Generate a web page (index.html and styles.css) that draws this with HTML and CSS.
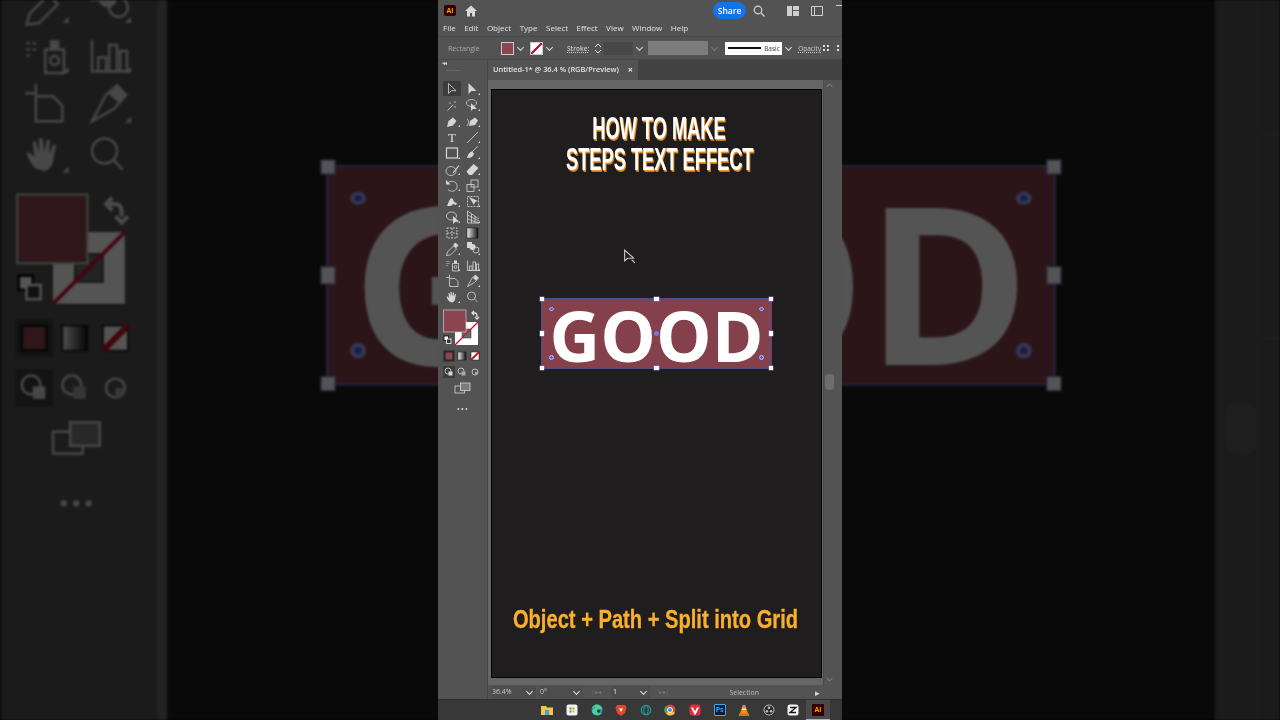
FILE: index.html
```html
<!DOCTYPE html>
<html lang="en">
<head>
    <meta charset="UTF-8">
    <title>How to make steps text effect</title>
    <link rel="stylesheet" href="styles.css">
</head>
<body>
    <!-- blurred, darkened zoom of the same window behind the phone-sized video -->
    <div class="backdrop">
        <div class="bd-panel">
            <svg class="bd-tools" viewBox="0 0 50 350"><use href="#tools"></use></svg>
        </div>
        <div class="bd-gutter"></div>
        <div class="bd-board"></div>
        <div class="bd-scroll"><div class="bd-thumb"></div></div>
        <div class="bd-edge"><div class="bd-cell"></div><div class="bd-cell"></div><div class="bd-cell"></div></div>
        <div class="art art-back">
            <span class="art-text">GOOD</span>
            <i class="h h-tl"></i><i class="h h-tc"></i><i class="h h-tr"></i>
            <i class="h h-ml"></i><i class="h h-mr"></i>
            <i class="h h-bl"></i><i class="h h-bc"></i><i class="h h-br"></i>
            <i class="r r-tl"></i><i class="r r-tr"></i><i class="r r-bl"></i><i class="r r-br"></i>
        </div>
        <div class="bd-dim"></div>
    </div>

    <div class="app">
        <div class="titlebar">
            <span class="ai-logo">Ai</span>
            <svg class="home" viewBox="0 0 12 12"><path d="M6 .5 0 6h2v5.500h3V8h2v3.500h3V6h2z"/></svg>
            <span class="spacer"></span>
            <span class="share">Share</span>
            <svg class="search" viewBox="0 0 12 12"><circle cx="5" cy="5" r="3.800"/><path d="m8 8 3.500 3.500"/></svg>
            <svg class="win-icon layout" viewBox="0 0 12 10"><path d="M0 0h5v10H0zM6 0h6v4H6zM6 5h6v5H6z"/></svg>
            <svg class="win-icon panel" viewBox="0 0 12 10"><path d="M.5.500h11v9H.500zM3.500 1v8"/></svg>
            <span class="minimize"></span>
        </div>

        <div class="menubar">
            <span>File</span><span>Edit</span><span>Object</span><span>Type</span><span>Select</span><span>Effect</span><span>View</span><span>Window</span><span>Help</span>
        </div>

        <div class="controlbar">
            <span class="ctl-label">Rectangle</span>
            <span class="swatch"></span>
            <span class="chev-box"></span>
            <span class="swatch none"></span>
            <span class="chev-box"></span>
            <span class="ctl-link stroke">Stroke:</span>
            <svg class="spin" viewBox="0 0 10 13"><path d="m2 5 3-3 3 3M2 8l3 3 3-3"/></svg>
            <span class="stroke-field"></span>
            <span class="chev-box"></span>
            <span class="gray-field"></span>
            <span class="chev-box dim"></span>
            <span class="brush"><b></b>Basic</span>
            <span class="chev-box"></span>
            <span class="ctl-link opacity">Opacity</span>
            <span class="grid-dots"></span>
            <span class="grip"></span>
        </div>

        <div class="workspace">
            <div class="toolbar">
                <div class="toolbar-head"><span class="collapse">&#9666;&#9666;</span></div>
                <svg class="tools" viewBox="0 0 50 350">
                    <defs>
                        <linearGradient id="gray-ramp"><stop offset="0" stop-color="#eee"/><stop offset="1" stop-color="#111"/></linearGradient>
                    </defs>
                    <g id="tools">
                        <rect class="dark" x="5" y="1" width="18" height="15"/>
                        <!-- selection -->
                        <path class="ln" d="M10.500 3.500v10l2.800-2.800h4.700z"/>
                        <path class="fl" d="M30.500 3v11l3-3h5z"/>
                        <!-- wand, lasso -->
                        <path class="ln" d="m9.500 30.500 6-6M17 21v2M16 27h2M11 23h2"/>
                        <ellipse class="ln" cx="33.500" cy="23" rx="5" ry="3.500"/>
                        <path class="fl" d="M33 23v8l2-2h4z"/>
                        <!-- pen, curvature -->
                        <path class="fl" d="m9 47 1.500-6 4.500-3.500 3.500 3.500-3.500 4.500z"/>
                        <path class="fl" d="m31 46 1-5 5-3.500 3 3-3 4.500z"/>
                        <path class="ln" d="M29 39c2 1 2 4 0 7"/>
                        <!-- type, line -->
                        <text class="tool-t" x="14" y="62">T</text>
                        <path class="ln" d="m29 63 11-11"/>
                        <!-- rect, brush -->
                        <rect class="ln2" x="8.500" y="68" width="11" height="10"/>
                        <path class="ln" d="m40 66-6 6"/>
                        <path class="fl" d="M34 71.500c-3 .5-4 3-5 6.500 4 0 6.500-1.500 7-4.500z"/>
                        <!-- shaper, eraser -->
                        <ellipse class="ln" cx="13" cy="91" rx="5" ry="4.500"/>
                        <path class="ln2" d="m15 93 6-7.500"/>
                        <path class="fl" d="m28.500 91.500 7-7.500 5 4-6.500 7h-3z"/>
                        <!-- rotate, scale -->
                        <path class="ln" d="M10 102.500c5-3 10 0 9 5-1 4-6 5-9 2"/>
                        <path class="fl" d="M8 100v4.500h4.500z"/>
                        <rect class="ln" x="29" y="104.500" width="7" height="7"/>
                        <rect class="ln" x="33" y="100" width="7" height="7"/>
                        <!-- puppet, free transform -->
                        <path class="fl" d="m9 126 2-5 2-3 2 1 1 3 3 1-1 2-3-1-2 2z"/>
                        <path class="ln dash" d="M29.500 116.500h11v10h-11z"/>
                        <path class="fl" d="m31 117 5 8 1-3 3-1z"/>
                        <!-- shape builder, perspective grid -->
                        <ellipse class="ln" cx="13.500" cy="136" rx="5" ry="4"/>
                        <path class="fl" d="M15 136v8l2-2 4-.5z"/>
                        <path class="ln" d="M29.500 131v12H41M29.500 131 41 139M29.500 135 41 141M29.500 139 41 143M33.500 134v9M37 136v7"/>
                        <!-- mesh, gradient -->
                        <path class="ln dash" d="M9 148h10v10H9zM9 153h10M14 148v10"/>
                        <rect class="grad" x="29" y="148" width="11" height="10" fill="url(#gray-ramp)"/>
                        <!-- eyedropper, blend -->
                        <path class="ln" d="m8.500 175.500 1-3.500 6-6 3 3-6 6z"/>
                        <path class="fl" d="m15 165 2.500-2.500 3 3-2.500 2.500z"/>
                        <rect class="fl" x="29" y="162" width="5" height="6"/>
                        <circle class="fl" cx="34.500" cy="167" r="3"/>
                        <circle class="ln" cx="38" cy="170" r="3"/>
                        <!-- spray, graph -->
                        <path class="ln" d="M14.500 183.500h6v7.500h-6z"/>
                        <rect class="fl" x="16" y="180.500" width="3" height="3"/>
                        <circle class="ln" cx="17.500" cy="187" r="1.400"/>
                        <path class="ln dash-fine" d="M8.500 181.500h4M8.500 183.500h3M8.500 185.500h2"/>
                        <path class="ln" d="M29.500 180.500v10H41"/>
                        <rect class="ln" x="31.500" y="186" width="2.500" height="4.500"/>
                        <rect class="ln" x="35" y="182" width="2.500" height="8.500"/>
                        <rect class="ln" x="38.500" y="184" width="2.200" height="6.500"/>
                        <!-- artboard, slice -->
                        <path class="ln" d="M11.500 198.500h5.500l3 3v5h-8.500zM11.500 194.500v3.500M8 197.500h3"/>
                        <path class="ln" d="m29.500 206.500 4.500-8.500 3.500-3 3 3-4 4.500z"/>
                        <path class="fl" d="m35 198 2.500-3 3 3-2.500 2.500z"/>
                        <!-- hand, zoom -->
                        <path class="fl" d="M13 222c-2 0-3-2-4-4l-.500-1.500 1 0 1.500 1.500-.500-5 1 0 1 3.500 0-4.500 1.200 0 .500 4.500 .8-4 1 0-.300 4.500 1.300-3 1 0-1 5.500c-.500 2-2 3-3 3z"/>
                        <circle class="ln" cx="33.500" cy="216" r="4"/>
                        <path class="ln" d="m36.500 219 2.800 3"/>
                        <!-- flyout corners -->
                        <path class="fl" d="M40 15h2v-2zM40 31h2v-2zM20 47h2v-2zM40 47h2v-2zM40 63h2v-2zM20 79h2v-2zM40 79h2v-2zM20 95h2v-2zM40 95h2v-2zM20 111h2v-2zM40 111h2v-2zM20 127h2v-2zM40 127h2v-2zM20 143h2v-2zM40 143h2v-2zM20 175h2v-2zM40 175h2v-2zM20 191h2v-2zM40 191h2v-2zM40 207h2v-2zM20 223h2v-2z"/>
                        <!-- fill and stroke -->
                        <rect class="paper" x="17" y="242" width="23" height="23"/>
                        <rect class="inner" x="24" y="249" width="9" height="9"/>
                        <path class="slash" d="m17 265 23-23"/>
                        <rect class="fillbox" x="5.500" y="230" width="22.500" height="22"/>
                        <path class="swap" d="M34 233h3c2 0 2 2 2 4M36 231l-2 2 2 2M37 237l2 2 2-2"/>
                        <rect class="defa" x="6" y="256" width="4.500" height="4.500"/>
                        <rect class="defb" x="8.500" y="259" width="4.500" height="4.500"/>
                        <!-- colour modes -->
                        <rect class="dark" x="5" y="270" width="12" height="12"/>
                        <rect class="mode-fill" x="7" y="272" width="8" height="8"/>
                        <rect class="mode-grad" x="20" y="272" width="8" height="8" fill="url(#gray-ramp)"/>
                        <rect class="mode-none" x="33" y="272" width="8" height="8"/>
                        <path class="slash thick" d="m33 280 8-8"/>
                        <!-- draw modes -->
                        <rect class="dark" x="5" y="286" width="12" height="12"/>
                        <circle class="ln" cx="10" cy="291" r="3"/><rect class="fl" x="10.500" y="291.500" width="4" height="4"/>
                        <circle class="ln" cx="23" cy="291" r="3"/><rect class="fl2" x="23.500" y="291.500" width="4" height="4"/>
                        <circle class="ln" cx="37" cy="292" r="3"/><path class="fl2" d="M37 292h3a3 3 0 0 1-3 3z"/>
                        <!-- screen mode, more -->
                        <rect class="ln" x="17" y="306" width="9.500" height="7"/>
                        <rect class="screen" x="22.500" y="303" width="9.500" height="7.500"/>
                        <circle class="fl" cx="20.400" cy="329" r="1"/><circle class="fl" cx="24.400" cy="329" r="1"/><circle class="fl" cx="28.400" cy="329" r="1"/>
                    </g>
                </svg>
            </div>

            <div class="document">
                <div class="tabbar">
                    <div class="tab">Untitled-1* @ 36.4 % (RGB/Preview)<span class="tab-close">&times;</span></div>
                </div>
                <div class="canvas-row">
                    <div class="canvas">
                        <div class="artboard">
                            <div class="headline">
                                <div class="headline-1">HOW TO MAKE</div>
                                <div class="headline-2">STEPS TEXT EFFECT</div>
                            </div>
                            <svg class="cursor" viewBox="0 0 12 14"><path d="M1.500 1v10l2.800-2.300 5.500-.2z"/><path class="cursor-tail" d="m8 10 3 3"/></svg>
                            <div class="art art-main">
                                <span class="art-text">GOOD</span>
                                <i class="h h-tl"></i><i class="h h-tc"></i><i class="h h-tr"></i>
                                <i class="h h-ml"></i><i class="h h-mr"></i>
                                <i class="h h-bl"></i><i class="h h-bc"></i><i class="h h-br"></i>
                                <i class="r r-tl"></i><i class="r r-tr"></i><i class="r r-bl"></i><i class="r r-br"></i>
                                <i class="center-dot"></i>
                            </div>
                            <div class="caption">Object + Path + Split into Grid</div>
                        </div>
                    </div>
                    <div class="vscroll">
                        <svg class="caret" viewBox="0 0 10 6"><path d="m1 5 4-4 4 4"/></svg>
                        <div class="thumb"></div>
                        <svg class="caret" viewBox="0 0 10 6"><path d="m1 1 4 4 4-4"/></svg>
                    </div>
                </div>
                <div class="statusbar">
                    <span class="st-field zoom">36.4%</span><span class="st-chev"></span>
                    <span class="st-field angle">0&deg;</span><span class="st-chev"></span>
                    <span class="st-arrows">|&#9666; &#9666;</span>
                    <span class="st-field page">1</span><span class="st-chev"></span>
                    <span class="st-arrows next">&#9656; &#9656;|</span>
                    <span class="st-mode">Selection</span>
                    <span class="st-play">&#9656;</span>
                </div>
            </div>
        </div>

        <div class="taskbar">
            <svg class="tb" viewBox="0 0 12 12"><path fill="#f3c54b" d="M0 2h5l1 1.500h6V11H0z"/><path fill="#4aa3d8" d="M4 6h4v5H4z"/></svg>
            <svg class="tb" viewBox="0 0 12 12"><rect width="11" height="11" x=".5" y=".5" rx="2" fill="#f4f4f4"/><path fill="#e3562c" d="M3.500 3.500h2v2h-2z"/><path fill="#7fb92d" d="M6.500 3.500h2v2h-2z"/><path fill="#2b9be0" d="M3.500 6.500h2v2h-2z"/><path fill="#f4b400" d="M6.500 6.500h2v2h-2z"/></svg>
            <span class="tb-slot on"><svg class="tb" viewBox="0 0 12 12"><circle cx="6" cy="6" r="5.500" fill="#1b8fd6"/><path fill="#4fd18b" d="M1 8c2 4 8 4 10 1-3 1-5 0-5-2 0-1 1-2 3-2 2 0 2.500 1 2.500 1C11 2 8 .5 6 .5 3 .5 1 3 1 5c1-1.500 3-2 4-1.500C3 4 1 6 1 8z"/><circle cx="7.500" cy="7" r="1.500" fill="#2e2e2e"/></svg></span>
            <svg class="tb" viewBox="0 0 12 12"><path fill="#e2482b" d="M2 1h8l1.500 2.500L10 9l-4 3-4-3L.5 3.500z"/><path fill="#fff" d="M4 4.500h4L6 8z"/></svg>
            <svg class="tb" viewBox="0 0 12 12"><circle cx="6" cy="6" r="4.700" fill="none" stroke="#1f9c98" stroke-width="1.200"/><ellipse cx="6" cy="6" rx="2.200" ry="4.300" fill="none" stroke="#1f9c98" stroke-width="1"/></svg>
            <svg class="tb" viewBox="0 0 12 12"><circle cx="6" cy="6" r="5.500" fill="#e1463a"/><path fill="#f9c22e" d="M6 6 11 9a5.500 5.500 0 0 1-9 .5z"/><path fill="#4aa84e" d="M6 6 1.700 9.500A5.500 5.500 0 0 1 2 1.800z"/><circle cx="6" cy="6" r="2.500" fill="#4a90e2" stroke="#fff"/></svg>
            <svg class="tb" viewBox="0 0 12 12"><rect x=".5" y=".5" width="11" height="11" rx="3" fill="#e22b3d"/><path d="m3 3.500 3 6 3-6" fill="none" stroke="#fff" stroke-width="1.800"/></svg>
            <span class="tb-box ps">Ps</span>
            <svg class="tb" viewBox="0 0 12 12"><path fill="#f18a1c" d="M4.800 1h2.400l3 9H1.800z"/><path fill="#fff" d="M4.200 4.500h3.600l.4 1.500H3.800z"/><path fill="#d9771a" d="M1 9.500h10V12H1z"/></svg>
            <span class="tb-slot on"><svg class="tb" viewBox="0 0 12 12"><circle cx="6" cy="6" r="5" fill="#2a2a2a" stroke="#bdbdbd"/><circle cx="6" cy="3.800" r="1.300" fill="#bdbdbd"/><circle cx="3.900" cy="7.300" r="1.300" fill="#bdbdbd"/><circle cx="8.100" cy="7.300" r="1.300" fill="#bdbdbd"/></svg></span>
            <svg class="tb" viewBox="0 0 12 12"><rect x=".5" y=".5" width="11" height="11" rx="2.500" fill="#f4f4f4"/><path d="M3 3.500h6L3 8.500h6" fill="none" stroke="#111" stroke-width="1.300"/></svg>
            <span class="tb-slot active on"><span class="tb-box ai">Ai</span></span>
        </div>
    </div>
</body>
</html>
```

FILE: styles.css
```css
* {
    box-sizing: border-box;
    margin: 0;
    padding: 0;
}

body {
    width: 1280px;
    height: 720px;
    overflow: hidden;
    background-color: #000;
    font-family: 'Open Sans', sans-serif;
    display: flex;
    justify-content: center;
    position: relative;
}

/* backdrop */
.backdrop {
    position: absolute;
    inset: 0;
    display: flex;
    overflow: hidden;
    background-color: #1f1d1e;
    filter: blur(0.8px);
}

.bd-panel {
    width: 157px;
    height: 720px;
    overflow: hidden;
    background-color: #535353;
    border-left: 3px solid #444;
    flex-shrink: 0;
}

.bd-tools {
    display: block;
    width: 156px;
    height: 1092px;
    margin-left: -3px;
    margin-top: -523px;
}

.bd-gutter {
    width: 10px;
    background-color: #6a6a6a;
}

.bd-board {
    flex: 1;
}

.bd-scroll {
    width: 47px;
    background-color: #535353;
    padding: 403px 5px 0 10px;
}

.bd-thumb {
    height: 52px;
    border-radius: 12px;
    background-color: #5c5c5c;
}

.bd-edge {
    width: 18px;
    background-color: #535353;
    border-left: 1px solid #4a4a4a;
    display: flex;
    flex-direction: column;
}

.bd-cell {
    height: 135px;
    border-bottom: 1px solid #6a6a6a;
}

.bd-cell + .bd-cell {
    height: 204px;
}

.bd-cell:last-child {
    border-bottom: none;
}

.bd-dim {
    position: absolute;
    inset: 0;
    background-color: rgba(0, 0, 0, 0.67);
}

/* selected rectangle, used at both scales */
.art {
    position: absolute;
    width: 229px;
    height: 69px;
    background-color: #84404b;
    box-shadow: 0 0 0 0.6px #6c6fd0;
    display: flex;
    align-items: center;
    justify-content: center;
    padding-top: 4px;
}

.art-back {
    left: 328px;
    top: 167px;
    transform: scale(3.17, 3.14);
    transform-origin: top left;
}

.art-main {
    left: 50px;
    top: 209px;
}

.art-text {
    font-family: 'Open Sans', sans-serif;
    font-weight: 700;
    font-size: 70px;
    line-height: 65px;
    color: #fff;
}

.h {
    position: absolute;
    width: 4.400px;
    height: 4.400px;
    background-color: #fff;
    box-shadow: 0 0 0 0.4px #8a8ee0;
}

.h-tl, .h-tc, .h-tr { top: -2.200px; }
.h-ml, .h-mr { top: 32.300px; }
.h-bl, .h-bc, .h-br { bottom: -2.200px; }
.h-tl, .h-ml, .h-bl { left: -2.200px; }
.h-tc, .h-bc { left: 112.300px; }
.h-tr, .h-mr, .h-br { right: -2.200px; }

.r {
    position: absolute;
    width: 4.600px;
    height: 4.600px;
    border-radius: 50%;
    background: radial-gradient(#4a5ad0 30%, #a4a8f4 38%, #a4a8f4 68%, transparent 76%);
}

.r-tl, .r-tr { top: 7.500px; }
.r-bl, .r-br { bottom: 8px; }
.r-tl, .r-bl { left: 7px; }
.r-tr, .r-br { right: 7px; }

.center-dot {
    position: absolute;
    left: 112px;
    top: 32px;
    width: 5px;
    height: 5px;
    border-radius: 50%;
    background-color: #7278e0;
}

/* app window */
.app {
    position: relative;
    width: 404px;
    height: 720px;
    display: flex;
    flex-direction: column;
    background-color: #535353;
    color: #e0e0e0;
    filter: blur(0.4px);
}

.titlebar {
    height: 21px;
    display: flex;
    align-items: center;
    padding-left: 6px;
    flex-shrink: 0;
}

.ai-logo {
    width: 12px;
    height: 11px;
    background-color: #330000;
    border-radius: 2px;
    color: #ff9a00;
    font-size: 7px;
    font-weight: 700;
    line-height: 11px;
    text-align: center;
}

.home {
    width: 12px;
    height: 12px;
    margin-left: 9px;
    fill: #d8d8d8;
}

.spacer {
    flex: 1;
}

.share {
    width: 33px;
    height: 17px;
    border-radius: 9px;
    background-color: #1473e6;
    color: #fff;
    font-size: 8.500px;
    font-weight: 600;
    line-height: 17px;
    text-align: center;
}

.search {
    width: 12px;
    height: 12px;
    margin-left: 7px;
    fill: none;
    stroke: #d8d8d8;
    stroke-width: 1.200;
}

.win-icon {
    width: 12px;
    height: 10px;
    margin-left: 22px;
}

.win-icon.layout {
    fill: #cfcfcf;
}

.win-icon.panel {
    margin-left: 12px;
    fill: none;
    stroke: #cfcfcf;
}

.minimize {
    width: 6px;
    height: 1px;
    margin-left: 13px;
    margin-top: -10px;
    background-color: #cfcfcf;
}

.menubar {
    height: 14px;
    margin-top: -1px;
    display: flex;
    align-items: center;
    gap: 8.500px;
    padding-left: 5px;
    font-size: 8px;
    color: #e4e4e4;
    flex-shrink: 0;
}

.controlbar {
    height: 24px;
    margin-top: 2px;
    border-top: 1px solid #474747;
    border-bottom: 1px solid #474747;
    display: flex;
    align-items: center;
    padding-left: 10px;
    flex-shrink: 0;
}

.ctl-label {
    width: 53px;
    font-size: 7px;
    color: #aaa;
}

.swatch {
    width: 13px;
    height: 13px;
    background-color: #8b4450;
    border: 1px solid #c9c9c9;
}

.swatch.none {
    margin-left: 5px;
    background-color: #fff;
    background-image: linear-gradient(135deg, transparent 42%, #c8102e 42%, #c8102e 58%, transparent 58%);
}

.chev-box {
    width: 10px;
    height: 13px;
    margin-left: 1px;
    position: relative;
}

.chev-box::after,
.st-chev::after {
    content: '';
    position: absolute;
    left: 3px;
    top: 3px;
    width: 4px;
    height: 4px;
    border-right: 1px solid #ddd;
    border-bottom: 1px solid #ddd;
    transform: rotate(45deg);
}

.chev-box.dim::after {
    border-color: #777;
}

.ctl-link {
    font-size: 6.500px;
    color: #ccc;
    text-decoration: underline dotted;
}

.ctl-link.stroke {
    margin-left: 13px;
    font-weight: 600;
}

.ctl-link.opacity {
    margin-left: 5px;
}

.spin {
    width: 10px;
    height: 13px;
    margin-left: 4px;
    fill: none;
    stroke: #ddd;
}

.stroke-field {
    width: 30px;
    height: 13px;
    background-color: #484848;
}

.gray-field {
    width: 60px;
    height: 14px;
    margin-left: 4px;
    background-color: #7c7c7c;
}

.brush {
    width: 57px;
    height: 13px;
    margin-left: 6px;
    background-color: #fff;
    color: #444;
    font-size: 6.500px;
    line-height: 13px;
    display: flex;
    align-items: center;
    gap: 3px;
    padding-left: 3px;
}

.brush b {
    width: 33px;
    height: 1.500px;
    background-color: #111;
}

.grid-dots {
    width: 8px;
    height: 8px;
    margin-left: 1px;
    background-image: radial-gradient(#ddd 1.500px, transparent 0);
    background-size: 4px 4px;
}

.grip {
    width: 4px;
    height: 9px;
    margin-left: 6px;
    background-image: radial-gradient(#ddd 1.500px, transparent 0);
    background-size: 4px 4px;
}

.workspace {
    flex: 1;
    display: flex;
    min-height: 0;
}

.toolbar {
    width: 50px;
    flex-shrink: 0;
    border-right: 1px solid #474747;
    overflow: hidden;
}

.toolbar-head {
    height: 20px;
    position: relative;
}

.toolbar-head::after {
    content: '';
    position: absolute;
    left: 8px;
    top: 10px;
    width: 14px;
    height: 1px;
    background-color: #666;
}

.collapse {
    position: absolute;
    left: 4px;
    top: 0;
    font-size: 6px;
    line-height: 6px;
    letter-spacing: -1px;
    color: #ccc;
}

.tools {
    display: block;
    width: 50px;
    height: 350px;
    overflow: visible;
}

/* tool icon paint, shared by the real panel and the zoomed one */
.ln { fill: none; stroke: #d6d6d6; stroke-width: 0.800; }
.ln2 { fill: none; stroke: #d6d6d6; stroke-width: 1.200; }
.fl { fill: #d6d6d6; }
.fl2 { fill: #a8a8a8; }
.dash { stroke-dasharray: 2 1; }
.dash-fine { stroke-dasharray: 1 1; }
.dark { fill: #3c3c3c; }
.tool-t { fill: #e0e0e0; font-family: 'Liberation Serif', serif; font-size: 13px; text-anchor: middle; }
.grad, .mode-grad { stroke: #111; stroke-width: 0.500; }
.paper { fill: #fff; }
.inner { fill: #6a6a6a; stroke: #333; stroke-width: 0.500; }
.slash { stroke: #c8102e; stroke-width: 1.200; }
.slash.thick { stroke-width: 2; }
.swap { fill: none; stroke: #e0e0e0; stroke-width: 1.300; }
.fillbox { fill: #8b4450; stroke: #c8c8c8; stroke-width: 0.700; }
.defa { fill: #fff; stroke: #000; stroke-width: 0.800; }
.defb { fill: #333; stroke: #fff; stroke-width: 0.800; }
.mode-fill { fill: #8b4450; stroke: #111; stroke-width: 0.800; }
.mode-none { fill: #fff; stroke: #111; stroke-width: 0.500; }
.screen { fill: #7a7a7a; stroke: #d6d6d6; stroke-width: 0.800; }

.document {
    flex: 1;
    display: flex;
    flex-direction: column;
    min-width: 0;
}

.tabbar {
    height: 20px;
    background-color: #434343;
    flex-shrink: 0;
}

.tab {
    width: 150px;
    height: 20px;
    padding-left: 5px;
    background-color: #535353;
    font-size: 7.400px;
    font-weight: 600;
    line-height: 19px;
    color: #e4e4e4;
    display: flex;
    justify-content: space-between;
    padding-right: 5px;
    white-space: nowrap;
}

.tab-close {
    font-size: 9px;
    font-weight: 700;
}

.canvas-row {
    flex: 1;
    display: flex;
    min-height: 0;
}

.canvas {
    width: 335px;
    padding: 9px 2px 7px 3px;
    background-color: #666;
}

.artboard {
    position: relative;
    width: 331px;
    height: 100%;
    background-color: #1f1d1e;
    border: 1px solid #000;
    overflow: hidden;
}

.headline {
    position: absolute;
    left: 0;
    top: 23px;
    width: 331px;
    font-family: 'Liberation Sans', sans-serif;
    font-weight: 700;
    text-align: center;
    color: #fff;
    text-shadow: 1px 1px 0 #f09a30, 2px 2px 0 #c8761f;
}

.headline-1,
.headline-2 {
    font-size: 32px;
    line-height: 31px;
    white-space: nowrap;
    transform: scaleX(0.57);
    padding-left: 5px;
}

.cursor {
    position: absolute;
    left: 131px;
    top: 159px;
    width: 13px;
    height: 15px;
    fill: #1f1d1e;
    stroke: #cfcfcf;
    stroke-width: 1;
}

.cursor-tail {
    stroke: #cfcfcf;
}

.caption {
    position: absolute;
    left: -1px;
    top: 515px;
    width: 329px;
    font-family: 'Liberation Sans', sans-serif;
    font-weight: 700;
    font-size: 25px;
    line-height: 28px;
    white-space: nowrap;
    display: flex;
    justify-content: center;
    transform: scaleX(0.805);
    color: #fbb02d;
    -webkit-text-stroke: 0.3px #fbb02d;
}

.vscroll {
    width: 19px;
    padding: 3px 7px 3px 0;
    display: flex;
    flex-direction: column;
    align-items: center;
    border-left: 1px solid #4a4a4a;
}

.caret {
    width: 7px;
    height: 5px;
    fill: none;
    stroke: #aaa;
}

.thumb {
    width: 9px;
    height: 16px;
    margin: 286px 0 auto;
    border-radius: 4px;
    background-color: #6e6e6e;
}

.statusbar {
    height: 14px;
    display: flex;
    align-items: center;
    padding-left: 3px;
    font-size: 7px;
    color: #ccc;
    flex-shrink: 0;
}

.st-field {
    height: 12px;
    line-height: 12px;
    padding-left: 1px;
    background-color: #4d4d4d;
}

.st-field.zoom { width: 33px; }
.st-field.angle { width: 32px; padding-left: 1px; }
.st-field.page { width: 27px; margin-left: 6px; padding-left: 2px; color: #eee; }

.st-chev {
    position: relative;
    width: 12px;
    height: 12px;
    background-color: #4d4d4d;
    margin-right: 3px;
}

.st-arrows {
    width: 18px;
    margin-left: 1px;
    color: #777;
    text-align: center;
    font-size: 6px;
    white-space: nowrap;
}

.st-arrows.next {
    margin-left: 0;
    width: 22px;
}

.st-mode {
    width: 84px;
    color: #bbb;
    margin-left: 5px;
    text-align: right;
    padding-right: 5px;
    flex-shrink: 0;
}

.st-play {
    margin-left: 51px;
    color: #ddd;
    font-size: 9px;
}

.taskbar {
    height: 21px;
    display: flex;
    align-items: center;
    justify-content: flex-end;
    background-color: #383838;
    border-top: 1px solid #2e2e2e;
    padding-right: 18px;
    gap: 12.600px;
    flex-shrink: 0;
}

.tb {
    width: 12px;
    height: 12px;
    flex-shrink: 0;
}

.tb-slot {
    display: flex;
    position: relative;
}

.tb-slot.on::after {
    content: '';
    position: absolute;
    left: -3px;
    right: -3px;
    bottom: -5px;
    height: 1px;
    background-color: #76c9d0;
}

.tb-slot.active {
    background-color: #4b4b4b;
    margin: -4px -6px -4px -6px;
    padding: 4px 6px;
}

.tb-slot.active::after {
    left: 0;
    right: 0;
    bottom: 0;
}

.tb-box {
    width: 12px;
    height: 12px;
    border-radius: 1px;
    font-size: 7px;
    font-weight: 700;
    line-height: 12px;
    text-align: center;
    flex-shrink: 0;
}

.tb-box.ps {
    background-color: #001e36;
    border: 1px solid #31a8ff;
    color: #31a8ff;
    line-height: 10px;
}

.tb-box.ai {
    background-color: #330000;
    color: #ff9a00;
}
```
